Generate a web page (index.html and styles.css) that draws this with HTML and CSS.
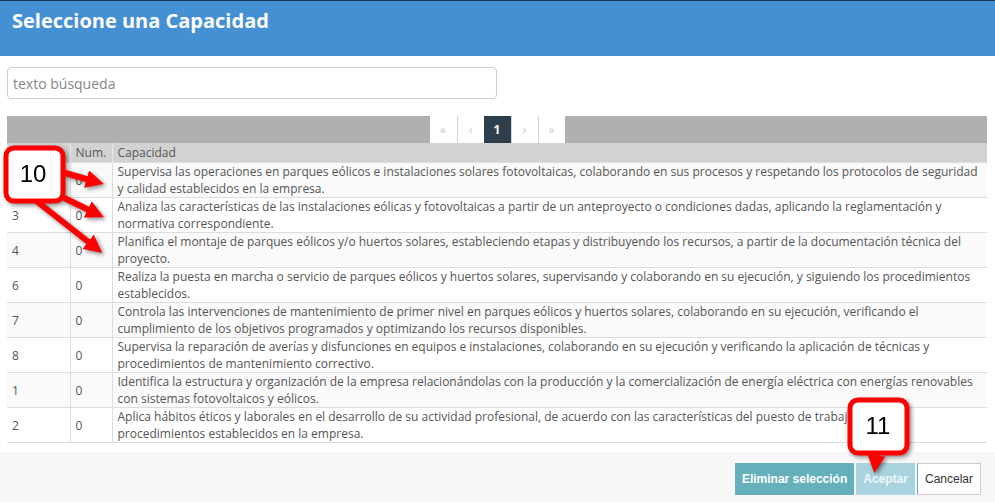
FILE: index.html
```html
<!DOCTYPE html>
<html lang="es">
<head>
  <meta charset="UTF-8" />
  <title>Seleccione una Capacidad</title>
  <link rel="stylesheet" href="styles.css">
</head>
<body>
  <div class="modal">
    <div class="modal-header">
      <h4>Seleccione una Capacidad</h4>
    </div>

    <div class="modal-body">
      <input class="search" type="text" placeholder="texto búsqueda">

      <div class="pager-bar">
        <ul class="pagination">
          <li class="disabled">&laquo;</li>
          <li class="disabled">&lsaquo;</li>
          <li class="active">1</li>
          <li class="disabled">&rsaquo;</li>
          <li class="disabled">&raquo;</li>
        </ul>
      </div>

      <table class="grid">
        <thead>
          <tr>
            <th class="col-id"></th>
            <th class="col-num">Num.</th>
            <th>Capacidad</th>
          </tr>
        </thead>
        <tbody>
          <tr>
            <td>5</td><td>0</td>
            <td>Supervisa las operaciones en parques eólicos e instalaciones solares fotovoltaicas, colaborando en sus procesos y respetando los protocolos de seguridad y calidad establecidos en la empresa.</td>
          </tr>
          <tr>
            <td>3</td><td>0</td>
            <td>Analiza las características de las instalaciones eólicas y fotovoltaicas a partir de un anteproyecto o condiciones dadas, aplicando la reglamentación y normativa correspondiente.</td>
          </tr>
          <tr>
            <td>4</td><td>0</td>
            <td>Planifica el montaje de parques eólicos y/o huertos solares, estableciendo etapas y distribuyendo los recursos, a partir de la documentación técnica del proyecto.</td>
          </tr>
          <tr>
            <td>6</td><td>0</td>
            <td>Realiza la puesta en marcha o servicio de parques eólicos y huertos solares, supervisando y colaborando en su ejecución, y siguiendo los procedimientos establecidos.</td>
          </tr>
          <tr>
            <td>7</td><td>0</td>
            <td>Controla las intervenciones de mantenimiento de primer nivel en parques eólicos y huertos solares, colaborando en su ejecución, verificando el cumplimiento de los objetivos programados y optimizando los recursos disponibles.</td>
          </tr>
          <tr>
            <td>8</td><td>0</td>
            <td>Supervisa la reparación de averías y disfunciones en equipos e instalaciones, colaborando en su ejecución y verificando la aplicación de técnicas y procedimientos de mantenimiento correctivo.</td>
          </tr>
          <tr>
            <td>1</td><td>0</td>
            <td>Identifica la estructura y organización de la empresa relacionándolas con la producción y la comercialización de energía eléctrica con energías renovables con sistemas fotovoltaicos y eólicos.</td>
          </tr>
          <tr>
            <td>2</td><td>0</td>
            <td>Aplica hábitos éticos y laborales en el desarrollo de su actividad profesional, de acuerdo con las características del puesto de trabajo y<br>procedimientos establecidos en la empresa.</td>
          </tr>
        </tbody>
      </table>
    </div>

    <div class="modal-footer">
      <button class="btn btn-info">Eliminar selección</button>
      <button class="btn btn-primary" disabled>Aceptar</button>
      <button class="btn btn-default">Cancelar</button>
    </div>

    <!-- anotaciones del tutorial -->
    <svg class="callouts" width="995" height="502" viewBox="0 0 995 502">
      <defs>
        <marker id="head" viewBox="0 0 10 10" refX="2" refY="5" markerWidth="3" markerHeight="3" orient="auto">
          <path d="M0,0 L10,5 L0,10 z" fill="#f00"/>
        </marker>
      </defs>
      <g class="mark">
        <line x1="58" y1="171" x2="90" y2="180" stroke="#f00" stroke-width="6" marker-end="url(#head)"/>
        <line x1="56" y1="194" x2="91" y2="211" stroke="#f00" stroke-width="6" marker-end="url(#head)"/>
        <line x1="30" y1="196" x2="91" y2="244" stroke="#f00" stroke-width="6" marker-end="url(#head)"/>
        <rect x="6" y="148" width="57" height="53" rx="8" fill="#fff" stroke="#f00" stroke-width="5"/>
        <text x="33" y="182" class="mark-num">10</text>
      </g>
      <g class="mark">
        <line x1="877" y1="450" x2="876" y2="459" stroke="#f00" stroke-width="6" marker-end="url(#head)"/>
        <rect x="850" y="400" width="57" height="53" rx="8" fill="#fff" stroke="#f00" stroke-width="5"/>
        <text x="878" y="434" class="mark-num">11</text>
      </g>
    </svg>
  </div>
</body>
</html>
```

FILE: styles.css
```css
* {
  box-sizing: border-box;
}

body {
  margin: 0;
  font-family: 'Open Sans', sans-serif;
  background-color: #fff;
}

.modal {
  position: relative;
  width: 995px;
  height: 502px;
  overflow: hidden;
}

.modal-header {
  height: 56px;
  background-color: #458fd3;
  border-top: 1px solid #1f3857;
  padding: 6px 12px 0;
}

.modal-header h4 {
  margin: 0;
  color: #fff;
  font-size: 20px;
  font-weight: 700;
  line-height: 28px;
}

.modal-body {
  height: 396px;
  padding: 11px 8px 0 7px;
}

.search {
  display: block;
  width: 490px;
  height: 32px;
  padding: 4px 5px;
  border: 1px solid #ccc;
  border-radius: 4px;
  font-family: 'Open Sans', sans-serif;
  font-size: 14px;
  color: #555;
}

.search::placeholder {
  color: #888;
}

.pager-bar {
  margin-top: 17px;
  height: 27px;
  background-color: #b0b0b0;
  display: flex;
  justify-content: center;
}

.pagination {
  list-style: none;
  margin: 0;
  padding: 0;
  display: flex;
}

.pagination li {
  width: 27px;
  height: 27px;
  line-height: 27px;
  text-align: center;
  font-size: 12px;
  background-color: #fff;
  border-left: 1px solid #d6d6d6;
}

.pagination li:first-child {
  border-left: 0;
}

.pagination li.disabled {
  color: #ccc;
}

.pagination li.active {
  background-color: #2d3e4d;
  color: #fff;
  font-weight: 700;
  border-left: 0;
}

.grid {
  width: 100%;
  border-collapse: collapse;
  font-size: 12px;
  line-height: 17px;
  color: #555;
}

.grid th {
  background-color: #d2d2d2;
  font-weight: 400;
  text-align: left;
  padding: 1px 5px;
  border-left: 1px solid #e6e6e6;
}

.grid th:first-child,
.grid td:first-child {
  border-left: 0;
}

.grid .col-id {
  width: 63px;
}

.grid .col-num {
  width: 42px;
}

.grid td {
  padding: 0 5px;
  vertical-align: middle;
  border-top: 1px solid #ddd;
  border-left: 1px solid #ddd;
  border-bottom: 1px solid #ddd;
}

.grid tbody tr:nth-child(odd) {
  background-color: #fafafa;
}

.modal-footer {
  height: 50px;
  background-color: #f7f7f7;
  padding: 11px 14px 0 0;
  display: flex;
  justify-content: flex-end;
  align-items: flex-start;
  gap: 2px;
}

.btn {
  height: 32px;
  padding: 0 6px;
  border: 1px solid transparent;
  font-family: 'Liberation Sans', Arial, sans-serif;
  font-size: 12px;
  font-weight: 700;
  color: #fff;
}

.btn-info {
  background-color: #64b1bb;
}

.btn-primary {
  background-color: #a9d3de;
  color: #eef7f9;
}

.btn-default {
  background-color: #fff;
  border-color: #ccc;
  border-left-color: #5aa9d6;
  color: #333;
  font-weight: 400;
  padding: 0 7px;
}

.callouts {
  position: absolute;
  left: 0;
  top: 0;
  pointer-events: none;
}

.mark {
  filter: drop-shadow(2px 2px 2px rgba(0, 0, 0, 0.45));
}

.mark-num {
  font-family: 'Liberation Sans', Arial, sans-serif;
  font-size: 24px;
  text-anchor: middle;
  fill: #000;
}
```
